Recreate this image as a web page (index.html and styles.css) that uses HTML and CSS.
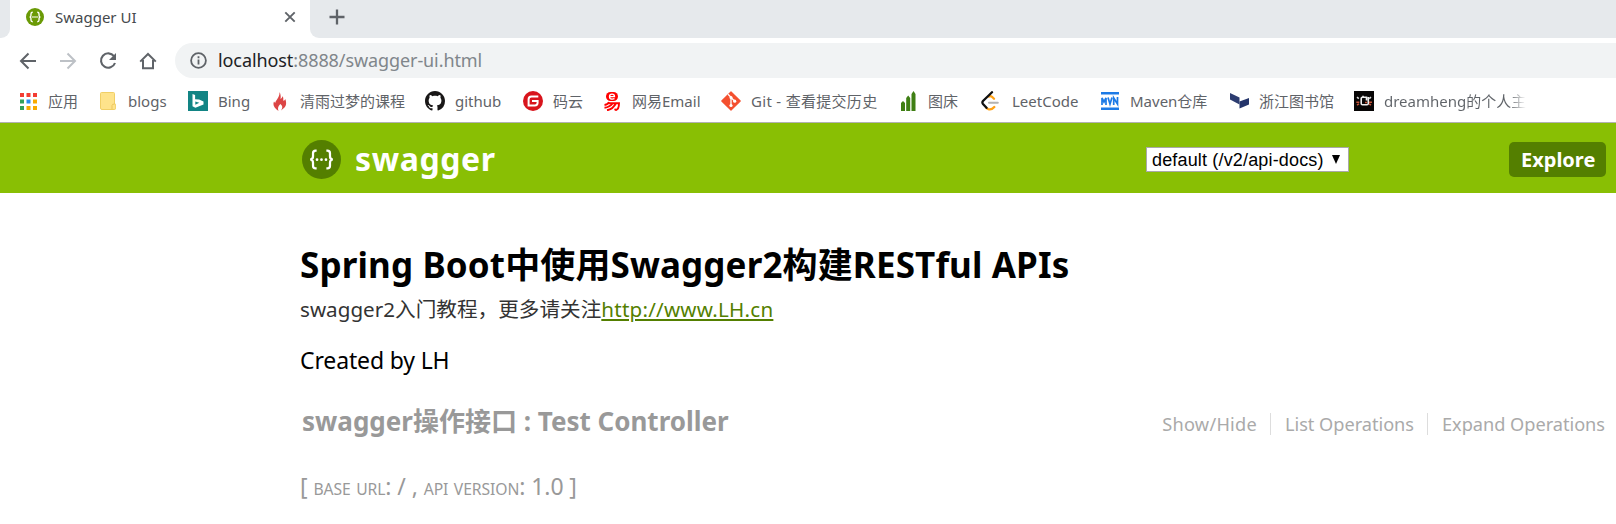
FILE: index.html
```
<!DOCTYPE html>
<html lang="zh-CN">
<head>
<meta charset="utf-8">
<title>Swagger UI</title>
<link rel="stylesheet" href="styles.css">
</head>
<body>
<header class="browser">
  <div class="tabs">
    <div class="tab-prev"></div>
    <div class="tab">
      <svg class="favicon" width="18" height="18" viewBox="0 0 40 40"><circle cx="20" cy="20" r="20" fill="#6a9a06"/><g fill="none" stroke="#fff" stroke-width="3"><path d="M15 9.500c-3 0-4 1-4 4v3c0 2-1 3.500-3 3.500 2 0 3 1.500 3 3.500v3c0 3 1 4 4 4M25 9.500c3 0 4 1 4 4v3c0 2 1 3.500 3 3.500-2 0-3 1.500-3 3.500v3c0 3-1 4-4 4"/></g><path d="M14 18.500h3v3h-3zM18.500 18.500h3v3h-3zM23 18.500h3v3h-3z" fill="#fff"/></svg>
      <span class="tab-title">Swagger UI</span>
      <svg class="tab-close" width="12" height="12" viewBox="0 0 12 12"><path d="M1.300 1.300l9.400 9.400M10.700 1.300l-9.400 9.400" stroke="#5f6368" stroke-width="1.900"/></svg>
    </div>
    <div class="tab-rest"><svg width="16" height="16" viewBox="0 0 16 16"><path d="M8 .5v15M.5 8h15" stroke="#5f6368" stroke-width="2.300"/></svg></div>
  </div>
  <div class="toolbar">
    <svg width="18" height="18" viewBox="0 0 18 18"><path d="M17 9H2M9.500 1.500L2 9l7.500 7.500" fill="none" stroke="#5f6368" stroke-width="2"/></svg>
    <svg width="18" height="18" viewBox="0 0 18 18"><path d="M1 9h15M8.500 1.500L16 9l-7.500 7.500" fill="none" stroke="#bdc1c6" stroke-width="2"/></svg>
    <svg width="18" height="18" viewBox="0 0 18 18"><path d="M15 4.200A7.200 7.200 0 1 0 16 11" fill="none" stroke="#5f6368" stroke-width="2.100"/><path d="M17 1v7h-7z" fill="#5f6368"/></svg>
    <svg width="18" height="18" viewBox="0 0 18 18"><path d="M1.200 9.600L9 2l7.800 7.600M4 8v8.300h10V8" fill="none" stroke="#5f6368" stroke-width="2"/></svg>
    <div class="omnibox">
      <svg width="17" height="17" viewBox="0 0 17 17"><circle cx="8.500" cy="8.500" r="7.400" fill="none" stroke="#5f6368" stroke-width="1.800"/><path d="M7.600 7.500h1.800v5H7.600zM7.600 4.300h1.800v1.900H7.600z" fill="#5f6368"/></svg>
      <span class="url"><b>localhost</b>:8888/swagger-ui.html</span>
    </div>
  </div>
  <nav class="bookmarks">
    <a><i><svg width="17" height="17" viewBox="0 0 17 17"><path fill="#f33c32" d="M0 0h4v4H0zM6.500 0h4v4h-4zM13 0h4v4h-4z"/><path fill="#34a05a" d="M0 6.500h4v4H0zM0 13h4v4H0z"/><path fill="#2a8cf0" d="M6.500 6.500h4v4h-4z"/><path fill="#f9ab00" d="M13 6.500h4v4h-4zM6.500 13h4v4h-4zM13 13h4v4h-4z"/></svg></i><span>应用</span></a>
    <a><i><svg width="16" height="18" viewBox="0 0 16 18"><path d="M1.500.5h12q1 0 1 1V12h.7q.5 0 .5.600v3.600q0 1.300-1.500 1.300H2q-1.500 0-1.500-1.500V1.500q0-1 1-1z" fill="#fee38b" stroke="#f0cf66"/><path d="M12 17v-3.500q0-1.500 2.500-1.500" fill="none" stroke="#edc55c"/></svg></i><span>blogs</span></a>
    <a><i><svg width="20" height="20" viewBox="0 0 20 20"><path d="M0 0h20v20H0z" fill="#128484"/><path d="M4.500 3l2.600 1v4.200l4 .3 4.400 2v3L7.400 16.800l-2.900-1.500zM7.300 10.500v3.200l4-2z" fill="#fff" fill-rule="evenodd"/></svg></i><span>Bing</span></a>
    <a><i><svg width="14" height="19" viewBox="0 0 14 19"><path d="M6.500 0c1.500 3 1.300 5 1 7 1.500-1 2-2 2-3 1.300 2 .7 3.500.7 4.500 1 .5 1.800-.5 2.100-1.500C13.500 10 13.500 13 11.500 15.500L8 18.500c2-3 1.500-5-.7-6.500-.8 1.500-3.300 2.500-1.800 7C1 16 -.5 13 1 9.500l1.200 1.500C2.500 8.500 7 5 6.500 0z" fill="#dc4545"/></svg></i><span>清雨过梦的课程</span></a>
    <a><i><svg width="20" height="20" viewBox="0 0 16 16"><path fill="#191717" d="M8 0C3.580 0 0 3.580 0 8c0 3.540 2.290 6.530 5.470 7.590.4.070.55-.17.55-.38 0-.19-.01-.82-.01-1.490-2.010.37-2.530-.49-2.690-.94-.09-.23-.48-.94-.82-1.130-.28-.15-.68-.52-.01-.53.63-.01 1.080.58 1.230.82.72 1.210 1.870.87 2.330.66.07-.52.28-.87.51-1.070-1.780-.2-3.640-.89-3.640-3.950 0-.87.31-1.590.82-2.150-.08-.2-.36-1.020.08-2.120 0 0 .67-.21 2.200.82.64-.18 1.320-.27 2-.27s1.360.09 2 .27c1.530-1.040 2.200-.82 2.200-.82.44 1.100.16 1.920.08 2.120.51.56.82 1.270.82 2.150 0 3.070-1.870 3.750-3.650 3.950.29.25.54.73.54 1.480 0 1.070-.01 1.930-.01 2.200 0 .21.15.46.55.38A8 8 0 0 0 16 8c0-4.420-3.580-8-8-8z"/></svg></i><span>github</span></a>
    <a><i><svg width="20" height="20" viewBox="0 0 20 20"><circle cx="10" cy="10" r="10" fill="#d8141c"/><path d="M15.300 5.400H8.500Q5.600 5.400 5.600 8.300v6.200h6.300q2.700 0 2.700-2.700V9.900H9" fill="none" stroke="#fff" stroke-width="2"/></svg></i><span>码云</span></a>
    <a><i><svg width="16" height="19" viewBox="0 0 16 19"><rect x="2" width="12" height="9" rx="4.500" fill="#f00"/><path d="M5.500 4.700h5Q10.500 2.200 8 2.200T5.500 4.700 8.500 7.200l2-.6" fill="none" stroke="#fff" stroke-width="1.300"/><path d="M.5 13Q4 12.500 5 10M4 11.300h11q0 6-3 6.700l-1.500-.8M8.500 11.500Q6 15 .5 15.800M11.800 11.500Q9 17 3 18.300" fill="none" stroke="#f00" stroke-width="1.900"/></svg></i><span>网易Email</span></a>
    <a><i><svg width="20" height="20" viewBox="0 0 20 20"><path d="M10 .8L19.200 10 10 19.200.8 10z" fill="#f4502f" stroke="#f4502f" stroke-width="1.200" stroke-linejoin="round"/><path d="M7 3.200l3 3v8.500M10 6.500l3.800 3.800" stroke="#fff" stroke-width="1.300" fill="none"/><g fill="#fff"><circle cx="10" cy="6.500" r="1.500"/><circle cx="10" cy="14.500" r="1.600"/><circle cx="13.700" cy="10.200" r="1.600"/></g></svg></i><span class="git">Git - 查看提交历史</span></a>
    <a><i><svg width="15" height="20" viewBox="0 0 15 20"><path d="M0 20v-8l2-2 2 2v8zM5.200 20V7l2-2.500 2 2.500v13zM10.500 20V3l2-3 2 3v17z" fill="#3f7f14"/></svg></i><span>图床</span></a>
    <a><i class="leet"><svg width="18" height="20" viewBox="0 0 18 20"><g fill="none" stroke-width="2.300" stroke-linecap="round"><path d="M8 5.500q1.500-1 3 .3l2 2M13.300 16q-3 3.400-6.300 2l-1.500-1" stroke="#ffa116"/><path d="M11 1.200L2 10q-1.200 1.500 0 3l3.500 3.800" stroke="#111"/><path d="M8 11.800h8.800" stroke="#b3b3b3" stroke-width="2"/></g></svg></i><span>LeetCode</span></a>
    <a><i><svg width="18" height="18" viewBox="0 0 18 18"><path d="M0 0h18v2.500H0zM0 15.500h18V18H0z" fill="#1c7ae6"/><path d="M1 13V6l2 4 2-4v7M7 5.500l2 6.500 2-6.500M12.700 13V6l3.800 6V5" fill="none" stroke="#1c7ae6" stroke-width="1.700"/></svg></i><span>Maven仓库</span></a>
    <a><i><svg width="19" height="16" viewBox="0 0 19 16"><path d="M0 0L9.500 4.500v7L0 6.500z" fill="#2c3c70"/><path d="M9.500 8.500L19 5v6.500L9.500 15.500z" fill="#24346a"/></svg></i><span>浙江图书馆</span></a>
    <a><i><svg width="20" height="20" viewBox="0 0 20 20"><path d="M0 0h20v20H0z" fill="#080606"/><path d="M12.500 9.500V6.200H8.500q-1.300 0-1.300 1.300v5q0 1.300 1.300 1.300H13q1.300 0 1.300-1.300V6M9 6V4.800" fill="none" stroke="#eee" stroke-width="1.600"/><path d="M3 6.200l1.800 1.500M17 6.200l-1.800 1.500" stroke="#ddd" stroke-width="1.500"/><path d="M2.300 11.200h3M3 14l2-1.200M15 11.200h3M17 14l-2-1.200M11 11.500h2" stroke="#c4553a" stroke-width="1.500"/></svg></i><span class="fade">dreamheng的个人主</span></a>
  </nav>
</header>
<section class="banner">
  <svg class="logo" width="39" height="39" viewBox="0 0 40 40"><circle cx="20" cy="20" r="20" fill="#547f00"/><g fill="none" stroke="#fff" stroke-width="2.300"><path d="M15 11h-1c-2 0-2.700.8-2.700 2.700v3c0 2-1 3.300-3 3.300 2 0 3 1.300 3 3.300v3c0 1.900.7 2.700 2.700 2.700h1M25 11h1c2 0 2.700.8 2.700 2.700v3c0 2 1 3.300 3 3.300-2 0-3 1.300-3 3.300v3c0 1.900-.7 2.700-2.700 2.700h-1"/></g><g fill="#fff"><circle cx="15.400" cy="20.200" r="1.400"/><circle cx="20" cy="20.200" r="1.400"/><circle cx="24.600" cy="20.200" r="1.400"/></g></svg>
  <span class="brand">swagger</span>
  <div class="select"><span>default (/v2/api-docs)</span><svg width="8" height="9" viewBox="0 0 8 9"><path d="M0 0h8L4 9z" fill="#000"/></svg></div>
  <div class="explore">Explore</div>
</section>
<main class="content">
  <h1>Spring Boot中使用Swagger2构建RESTful APIs</h1>
  <p class="desc"><span>swagger2入门教程，更多请关注</span><a>http://www.LH.cn</a></p>
  <p class="author">Created by LH</p>
  <div class="resource">
    <h2>swagger操作接口 : Test Controller</h2>
    <ul><li>Show/Hide</li><li>List Operations</li><li>Expand Operations</li></ul>
  </div>
  <p class="footer">[ <em>base url</em>: / , <em>api version</em>: 1.0 ]</p>
</main>
</body>
</html>
```
FILE: styles.css
```
* { box-sizing: border-box; }
body { margin: 0; width: 1616px; height: 524px; overflow: hidden; background: #fff; color: #000; font-family: "Noto Sans", "Noto Sans CJK SC", sans-serif; }
h1, h2, p, ul { margin: 0; padding: 0; }
svg { display: block; flex: none; }
span, a { white-space: nowrap; }
.tabs { display: flex; height: 38px; background: #fff; }
.tab-prev { width: 10px; background: #e6e9ec; border-bottom-right-radius: 9px; }
.tab { width: 300px; display: flex; align-items: center; padding: 0 14px 4px 16px; }
.tab-title { margin-left: 11px; font-size: 15px; color: #45494d; }
.tab-close { margin-left: auto; }
.tab-rest { flex: 1; background: #e6e9ec; border-bottom-left-radius: 9px; padding: 9px 19px; }
.toolbar { height: 45px; display: flex; align-items: center; padding-left: 19px; gap: 22px; }
.omnibox { flex: 1; height: 35px; margin-left: -4px; background: #f1f3f4; border-radius: 18px 0 0 18px; display: flex; align-items: center; padding-left: 15px; }
.url { margin-left: 11px; padding-bottom: 2px; font-size: 18px; letter-spacing: -.09px; color: #80868b; }
.url b { font-weight: 400; color: #202124; }
.bookmarks { height: 40px; border-bottom: 1px solid #b2b2b2; padding: 0 0 3px 18px; display: grid; align-items: center; color: #5f6368; font-size: 15px; line-height: 34px;
  grid-template-columns: 80px 90px 82px 155px 98px 79px 119px 177px 84px 118px 129px 125px 180px; }
.bookmarks a { display: flex; align-items: center; height: 34px; }
.bookmarks i { width: 20px; margin-right: 10px; display: flex; justify-content: center; flex: none; }
.bookmarks .leet svg { margin-left: -4px; }
.git { letter-spacing: .3px; }
.fade { background: linear-gradient(90deg, #5f6368 88%, #fff 100%); background-clip: text; -webkit-background-clip: text; color: transparent; }
.banner { height: 70px; background: #89bf04; display: flex; align-items: center; padding: 2px 10px 0 302px; }
.brand { margin-left: 14px; width: 141px; font-size: 32px; letter-spacing: .6px; font-weight: 700; color: #fff; line-height: 60px; }
.select { margin-left: 650px; width: 203px; height: 25px; background: #fff; border: 1px solid #a9a9a9; display: flex; align-items: center; padding: 2px 8px 0 5px; font-family: "Liberation Sans", sans-serif; font-size: 18px; letter-spacing: .16px; justify-content: space-between; }
.select svg { margin-top: -2px; }
.explore { margin-left: auto; width: 97px; height: 35px; border-radius: 5px; background: #547f00; color: #fff; font-weight: 700; font-size: 20px; line-height: 35px; padding-left: 12px; }
.content { padding: 45px 11px 0 300px; }
h1 { font-size: 35px; line-height: 53px; letter-spacing: .13px; white-space: nowrap; }
.desc { font-size: 20.600px; line-height: 37px; letter-spacing: .03px; color: #333; }
.desc a { color: #547f00; text-decoration: underline; letter-spacing: .22px; }
.author { font-size: 23px; line-height: 65px; letter-spacing: -.14px; }
.resource { display: flex; justify-content: space-between; height: 56px; padding-left: 2px; color: #999; }
h2 { font-size: 26px; line-height: 56px; }
.resource ul { display: flex; align-items: center; list-style: none; font-size: 18.200px; letter-spacing: -.03px; color: #aaa; padding-top: 6px; }
.resource li { line-height: 22px; padding-left: 14px; margin-left: 13px; border-left: 1px solid #ddd; }
.resource li:first-child { border: 0; letter-spacing: .25px; }
.footer { font-size: 23px; line-height: 75px; color: #999; letter-spacing: -.08px; }
.footer em { font-style: normal; font-size: 15.700px; text-transform: uppercase; word-spacing: 1.500px; }
```
